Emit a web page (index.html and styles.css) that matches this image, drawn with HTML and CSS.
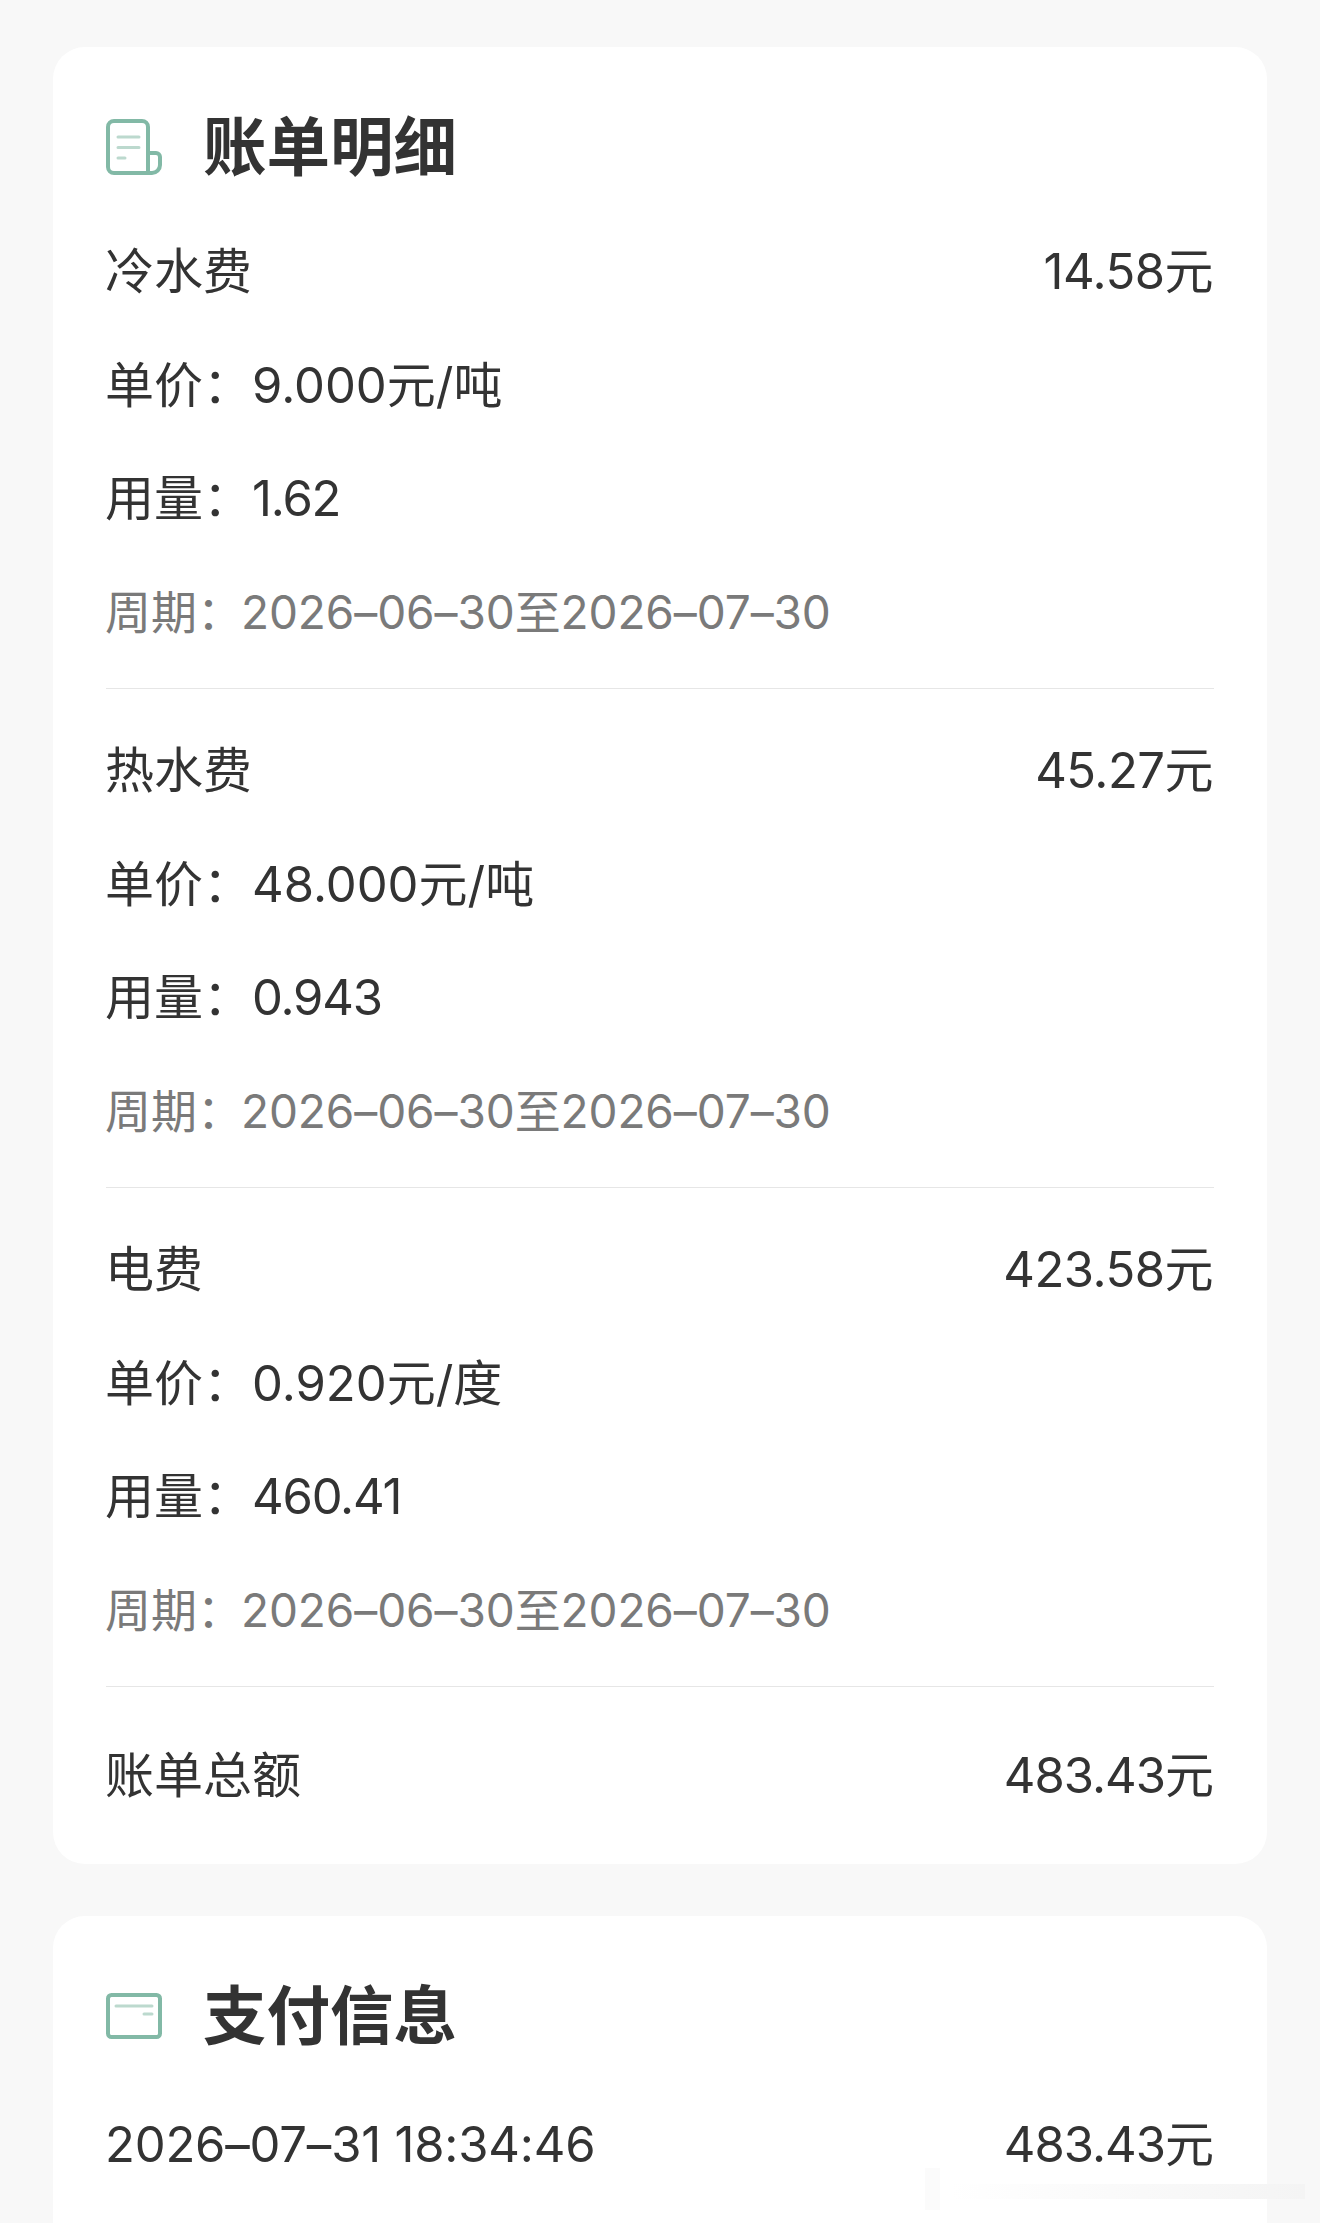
FILE: index.html
```html
<!DOCTYPE html>
<html lang="zh-CN">
<head>
    <meta charset="UTF-8">
    <meta name="viewport" content="width=device-width, initial-scale=1.0">
    <title>账单明细</title>
    <link rel="stylesheet" href="styles.css">
</head>
<body>
    <section class="card">
        <div class="card-title">
            <svg class="title-icon" viewBox="0 0 56 56" fill="none">
                <path d="M42 54H8a6 6 0 0 1-6-6V8a6 6 0 0 1 6-6h28a6 6 0 0 1 6 6v46" stroke="#82b9a6" stroke-width="4"/>
                <path d="M42 34h8a4 4 0 0 1 4 4v8a8 8 0 0 1-8 8h-4" stroke="#82b9a6" stroke-width="4"/>
                <path d="M12 18h21M12 28.500h21M12 39h7" stroke="#bcd9ce" stroke-width="3" stroke-linecap="round"/>
            </svg>
            <h2>账单明细</h2>
        </div>

        <div class="fee">
            <div class="row"><span>冷水费</span><span class="amount">14.58元</span></div>
            <div class="row">单价：<span>9.000元/吨</span></div>
            <div class="row usage">用量：<span>1.62</span></div>
            <div class="row period">周期：<span>2026–06–30至2026–07–30</span></div>
        </div>
        <div class="fee">
            <div class="row"><span>热水费</span><span class="amount">45.27元</span></div>
            <div class="row">单价：<span>48.000元/吨</span></div>
            <div class="row usage">用量：<span>0.943</span></div>
            <div class="row period">周期：<span>2026–06–30至2026–07–30</span></div>
        </div>
        <div class="fee">
            <div class="row"><span>电费</span><span class="amount">423.58元</span></div>
            <div class="row">单价：<span>0.920元/度</span></div>
            <div class="row usage">用量：<span>460.41</span></div>
            <div class="row period">周期：<span>2026–06–30至2026–07–30</span></div>
        </div>
        <div class="row total"><span>账单总额</span><span class="amount sum">483.43元</span></div>
    </section>

    <section class="card pay">
        <div class="card-title">
            <svg class="title-icon" viewBox="0 0 56 46" fill="none">
                <rect x="2" y="2" width="52" height="42" rx="3.500" stroke="#82b9a6" stroke-width="4"/>
                <path d="M10 13h36M38 21h8" stroke="#bcd9ce" stroke-width="3" stroke-linecap="round"/>
            </svg>
            <h2>支付信息</h2>
        </div>
        <div class="row"><span class="stamp">2026–07–31 18:34:46</span><span class="amount sum">483.43元</span></div>
    </section>

    <div class="mark-bar"></div>
    <div class="mark-dot"></div>
</body>
</html>
```

FILE: styles.css
```css
html, body {
    height: 2223px;
    overflow: hidden;
}

body {
    margin: 0;
    padding: 47px 53px 0;
    box-sizing: border-box;
    background-color: #f8f8f8;
    color: #333;
    font-family: 'Inter', 'Noto Sans CJK SC', sans-serif;
    font-size: 49px;
}

.card {
    background-color: #fff;
    border-radius: 32px;
    padding: 64px 53px 0;
    height: 1817px;
    box-sizing: border-box;
}

.pay {
    margin-top: 52px;
    height: 400px;
}

.card-title {
    display: flex;
    align-items: center;
    height: 72px;
    margin-bottom: 32px;
}

.pay .card-title {
    margin-bottom: 36px;
}

.title-icon {
    width: 56px;
    margin-right: 41px;
}

h2 {
    margin: 0;
    font-size: 63.500px;
    font-weight: 700;
    line-height: 72px;
}

.row {
    display: flex;
    align-items: baseline;
    height: 113.500px;
    line-height: 113.500px;
    margin: 0 1px 0 -1px;
}

.amount {
    margin-left: auto;
    letter-spacing: -0.5px;
}

.sum {
    letter-spacing: -1px;
}

.usage > span {
    letter-spacing: -1.2px;
}

.stamp {
    letter-spacing: -0.2px;
}

.fee {
    border-bottom: 1px solid #e6e6e6;
    padding-bottom: 19px;
    margin-bottom: 25px;
}

.period {
    color: #7a7a7a;
    font-size: 46px;
}

.period > span {
    margin-left: -2px;
    letter-spacing: -0.1px;
}

.row.total {
    margin-top: 32px;
}

/* faint watermark smudge at the bottom right */
.mark-bar {
    position: absolute;
    left: 950px;
    top: 2184px;
    width: 355px;
    height: 15px;
    background: linear-gradient(to right, #fff, #f4f4f4);
}

.mark-dot {
    position: absolute;
    left: 925px;
    top: 2168px;
    width: 15px;
    height: 42px;
    background-color: #fbfbfb;
}
```
